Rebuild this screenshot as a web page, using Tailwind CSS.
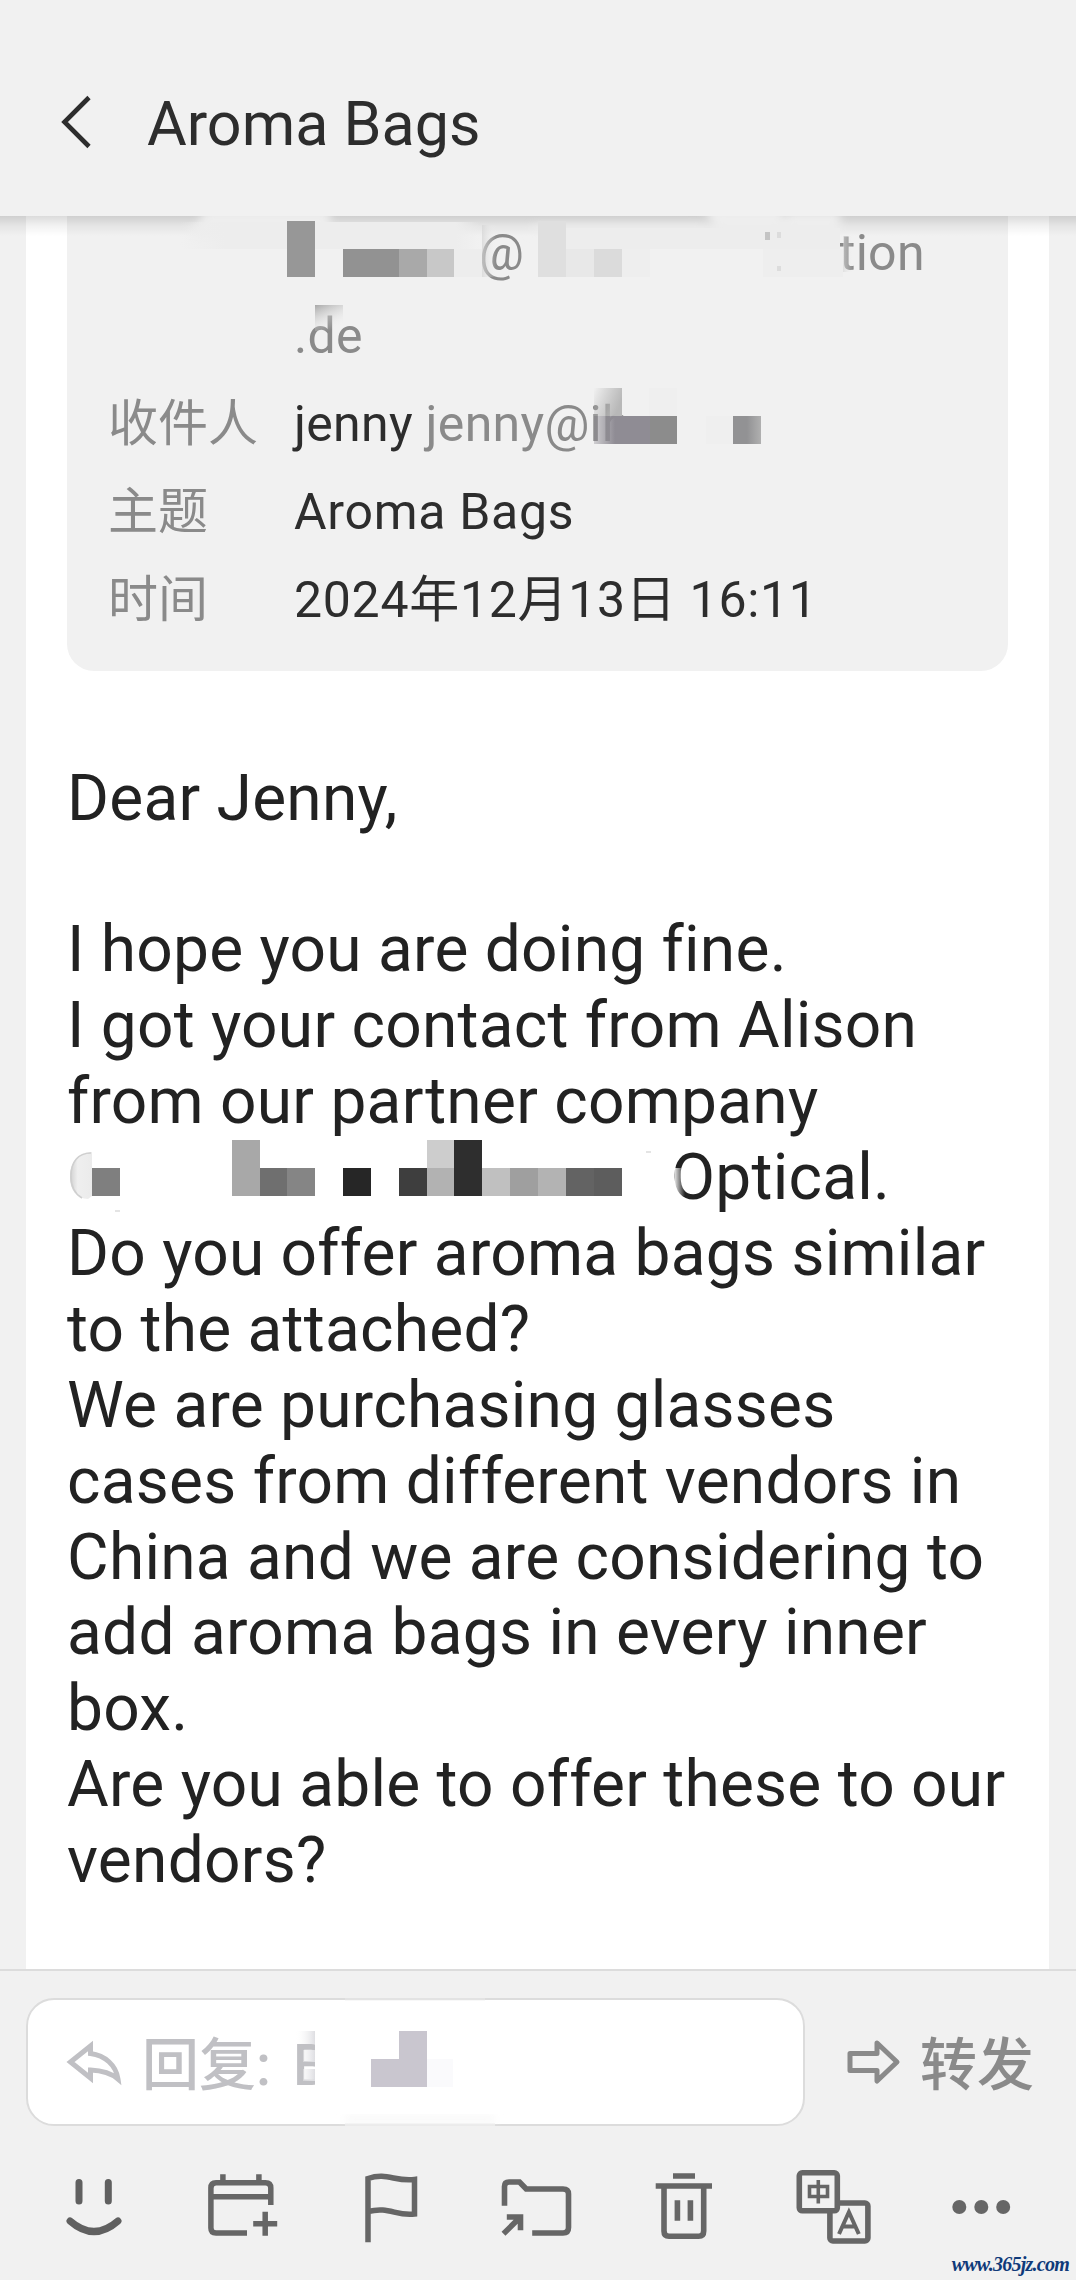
<!DOCTYPE html>
<html lang="zh-CN">
<head>
<meta charset="utf-8">
<title>Aroma Bags</title>
<script src="https://cdn.jsdelivr.net/npm/@tailwindcss/browser@4"></script>
</head>
<body class="bg-[#f1f1f1] text-[#2d2d2d] font-[Roboto,'Noto_Sans_CJK_SC',sans-serif]">
<div class="relative flex h-[2280px] w-[1076px] flex-col overflow-hidden">

  <header class="flex h-[216px] shrink-0 items-start bg-[#f1f1f1] pl-[58px]">
    <svg class="mt-[92px] h-[60px] w-[36px]" viewBox="0 0 36 60" fill="none" stroke="#2d2d2d" stroke-width="4.6"><path d="M31 5.5L6.500 30L31 54.500"/></svg>
    <h1 class="mt-[84px] ml-[53px] text-[61px] leading-[80px]">Aroma Bags</h1>
  </header>

  <main class="relative flex-1 overflow-hidden pr-[27px] pl-[26px]">
    <div class="h-full bg-white px-[41px]">
      <section class="flex h-[455px] flex-col gap-[5px] overflow-hidden rounded-b-[27px] bg-[#f1f1f1] pl-[41px] text-[50px] leading-[83px] tracking-[0.3px]">
        <div class="-mt-[4px] flex h-[166px] shrink-0">
          <div class="w-[186px]"></div>
          <div class="text-[#8a8a8a]">
            <div class="flex h-[83px]"><span class="ml-[185px] w-[360px]">@</span><span>tion</span></div>
            <div class="h-[83px]">.de</div>
          </div>
        </div>
        <div class="flex h-[83px] shrink-0"><span class="w-[186px] tracking-normal text-[#8a8a8a]">收件人</span><span class="whitespace-pre">jenny <span class="text-[#8a8a8a]">jenny@ih</span></span></div>
        <div class="flex h-[83px] shrink-0"><span class="w-[186px] tracking-normal text-[#8a8a8a]">主题</span><span class="tracking-[0.7px]">Aroma Bags</span></div>
        <div class="flex h-[83px] shrink-0"><span class="w-[186px] tracking-normal text-[#8a8a8a]">时间</span><span class="tracking-[0.7px]">2024年12月13日 16:11</span></div>
      </section>
      <article class="mt-[89.5px] whitespace-nowrap text-[64px] leading-[75.9px] tracking-[0.25px] text-[#222]">
        <p>Dear Jenny,</p>
        <br>
        <p>I hope you are doing fine.</p>
        <p>I got your contact from Alison<br>from our partner company<br><span class="inline-block w-[604px]"></span>Optical.</p>
        <p>Do you offer aroma bags similar<br>to the attached?</p>
        <p>We are purchasing glasses<br>cases from different vendors in<br>China and we are considering to<br>add aroma bags in every inner<br>box.</p>
        <p>Are you able to offer these to our<br>vendors?</p>
      </article>
    </div>
  </main>

  <footer class="h-[311px] shrink-0 border-t-2 border-[#dcdcdc] bg-[#f1f1f1]">
    <div class="flex items-center pt-[27px] pl-[26px]">
      <div class="flex h-[128px] w-[779px] items-center rounded-[28px] border-2 border-[#dcdcdc] bg-white pl-[36px]">
        <svg class="h-[52px] w-[60px]" viewBox="0 0 60 52" fill="none" stroke="#c0c0c4" stroke-width="5"><path d="M26.500 10L6.500 26L26.500 42V34C38 34.500 47 37 54 43C52 29 41 19.500 26.500 17.500Z"/></svg>
        <span class="mt-[7px] ml-[18px] text-[57px] leading-[80px] font-medium text-[#c0c0c4]">回复:<span class="ml-[22px]">B</span></span>
      </div>
      <svg class="ml-[40px] h-[52px] w-[60px]" viewBox="0 0 60 52" fill="none" stroke="#8a8a8a" stroke-width="5" stroke-linejoin="round"><path d="M5 17.500H32V7L52 26L32 45V34.500H5Z"/></svg>
      <span class="mt-[7px] ml-[15px] text-[57px] leading-[80px] font-medium text-[#8a8a8a]">转发</span>
    </div>
    <nav class="mt-[39px] flex justify-between pr-[55px] pl-[54px]">
      <svg class="size-20" viewBox="0 0 80 80" fill="none" stroke="#606060" stroke-width="7" stroke-linecap="round"><path d="M25 17.500V36M54.300 17.500V36M16 56Q40 77 64 56"/></svg>
      <svg class="size-20" viewBox="0 0 80 80" fill="none" stroke="#666" stroke-width="5.500"><path d="M68.800 40V23Q68.800 17.700 63.500 17.700H14Q8.900 17.700 8.900 23V63Q8.900 68 14 68H45M9 31.700H68M20.900 9.300V17M56.900 9.300V17M63.200 46.700V70.700M51.200 58.700H75.200"/></svg>
      <svg class="size-20" viewBox="0 0 80 80" fill="none" stroke="#666" stroke-width="5.500"><path d="M18 77.300V13.500C37 7 45 17 64.500 14.500V49C46 51.500 39 41 18 46.500"/></svg>
      <svg class="size-20" viewBox="0 0 80 80" fill="none" stroke="#666" stroke-width="5.600"><path d="M7.500 40.700V21.500Q7.500 17 12 17H22.500L29.200 24H66Q71.500 24 71.500 29V62.500Q71.500 68 66 68H35.200M6.500 68.700L23 52.500M9.800 52H23.500V65.300"/></svg>
      <svg class="size-20" viewBox="0 0 80 80" fill="none" stroke="#666" stroke-width="5.600"><path d="M28 11H50M10.700 21H67M19 21V66Q19 71.300 24 71.300H53.700Q58.700 71.300 58.700 66V21M32.400 35.300V55.700M45.400 35.300V55.700"/></svg>
      <svg class="size-20" viewBox="0 0 80 80" fill="#f1f1f1" stroke="#666" stroke-width="5.600"><rect x="36.900" y="38" width="38" height="38" rx="3"/><rect x="6.300" y="7.800" width="38" height="38" rx="3"/><path fill="none" stroke-width="3.600" d="M25.300 15V38.500M16.500 21.500H34.500V31.500H16.500Z"/><path fill="none" stroke-width="4" d="M46 69L55.900 47L65.800 69M49 61.500H63"/></svg>
      <svg class="size-20" viewBox="0 0 80 80" fill="#666"><circle cx="18.300" cy="42" r="7"/><circle cx="40.300" cy="42" r="7"/><circle cx="62.200" cy="42" r="7"/></svg>
    </nav>
  </footer>

  <!-- header shadow and the mosaic over private names -->
  <svg class="pointer-events-none absolute inset-0" width="1076" height="2280" viewBox="0 0 1076 2280">
    <defs>
      <linearGradient id="sh" x1="0" y1="0" x2="0" y2="1"><stop offset="0" stop-color="#000" stop-opacity=".14"/><stop offset=".5" stop-color="#000" stop-opacity=".05"/><stop offset="1" stop-color="#000" stop-opacity="0"/></linearGradient>
      <linearGradient id="d1" x1="0" y1="0" x2=".5" y2="1"><stop offset="0" stop-color="#a8a8a8"/><stop offset="1" stop-color="#f1f1f1" stop-opacity="0"/></linearGradient>
      <linearGradient id="r1" x1="0" y1="0" x2="1" y2=".4"><stop offset="0" stop-color="#b0b0b0" stop-opacity="0"/><stop offset="1" stop-color="#b8b8b8"/></linearGradient>
      <linearGradient id="r2"><stop offset="0" stop-color="#8f8c94" stop-opacity=".35"/><stop offset=".75" stop-color="#8f8c94"/></linearGradient>
      <linearGradient id="r3"><stop offset=".5" stop-color="#929294"/><stop offset="1" stop-color="#b0b0b0"/></linearGradient>
      <linearGradient id="b1"><stop offset="0" stop-color="#fff" stop-opacity="0"/><stop offset="1" stop-color="#dedee2"/></linearGradient>
      <linearGradient id="at"><stop offset="0" stop-color="#d4d4d4"/><stop offset="1" stop-color="#f1f1f1" stop-opacity="0"/></linearGradient>
      <linearGradient id="o1"><stop offset="0" stop-color="#fff" stop-opacity=".85"/><stop offset="1" stop-color="#fff" stop-opacity="0"/></linearGradient>
      <linearGradient id="c1"><stop offset="0" stop-color="#d0d0d0"/><stop offset=".35" stop-color="#efefef"/><stop offset="1" stop-color="#ebebeb"/></linearGradient>
      <linearGradient id="band"><stop offset="0" stop-color="#ededed" stop-opacity="0"/><stop offset=".15" stop-color="#ededed"/><stop offset=".92" stop-color="#ededed"/><stop offset="1" stop-color="#ededed" stop-opacity="0"/></linearGradient>
      <filter id="soft" x="-30%" y="-50%" width="160%" height="200%"><feGaussianBlur stdDeviation="5"/></filter>
      <clipPath id="below"><rect x="67" y="216" width="941" height="80"/></clipPath>
    </defs>
    <rect y="216" width="1076" height="20" fill="url(#sh)"/>
    <g clip-path="url(#below)" fill="#eeeeee">
      <path filter="url(#soft)" d="M205 210H330V238H190ZM536 226H700L694 224L716 232H530ZM704 208H782V232H716ZM790 212H840V232H770Z"/>
      <path fill="url(#band)" d="M180 222H480V249H180Z"/>
      <path fill="#ededed" d="M566 228H840V249H566Z"/>
    </g>
    <g shape-rendering="crispEdges">
      <path fill="#979797" d="M287 221h28v56h-28z"/>
      <path fill="#929292" d="M343 249h56v28h-56z"/>
      <path fill="#a9a9a9" d="M399 249h28v28h-28z"/>
      <path fill="#c8c8c8" d="M427 249h27v28h-27z"/>
      <path fill="#ededed" d="M454 249h28v28h-28z"/>
      <path fill="#dfdfdf" d="M538 221h28v56h-28z"/>
      <path fill="#e8e8e8" d="M566 249h28v28h-28z"/>
      <path fill="#dbdbdb" d="M594 249h28v28h-28z"/>
      <path fill="#eee" d="M622 249h28v28h-28zM763 249h80v28h-80z"/>
      <path fill="#efefef" d="M649 388h28v28h-28zM706 416h27v28h-27z"/>
      <path fill="#8f8c94" d="M622 416h28v28h-28z"/>
      <path fill="#8c8c8c" d="M650 416h27v28h-27z"/>
    </g>
    <path fill="url(#at)" opacity=".7" d="M482 225h14v52h-14z"/>
    <path fill="#c4c4c4" d="M765 232h5v8h-5z"/><path fill="#dcdcdc" d="M777 232h4v6h-4zM777 266h4v5h-4z"/>
    <path fill="url(#at)" opacity=".6" d="M843 236h10v36h-10z"/>
    <path fill="url(#d1)" d="M315 305h28v26h-28z"/>
    <path fill="url(#r1)" d="M594 388h28v28h-28z"/>
    <path fill="url(#r2)" d="M594 416h28v28h-28z"/>
    <path fill="url(#r3)" d="M733 416h28v28h-28z"/>

    <path fill="url(#c1)" d="M92 1152C78 1152 70 1162 70 1177C70 1190 77 1199 88 1199L92 1196Z"/>
    <path fill="none" stroke="#cfcfcf" stroke-width="1.500" d="M91 1153C78 1153 71 1162 71 1176C71 1187 75 1194 82 1198"/>
    <g shape-rendering="crispEdges">
      <path fill="#7f7f7f" d="M92 1168h28v28h-28z"/>
      <path fill="#a8a8a8" d="M232 1140h28v56h-28z"/>
      <path fill="#6f6f6f" d="M260 1168h27v28h-27z"/>
      <path fill="#858585" d="M287 1168h28v28h-28z"/>
      <path fill="#262626" d="M343 1168h28v28h-28z"/>
      <path fill="#3e3e3e" d="M399 1168h28v28h-28z"/>
      <path fill="#cdcdcd" d="M427 1140h27v28h-27z"/>
      <path fill="#b2b2b2" d="M427 1168h27v28h-27z"/>
      <path fill="#2e2e2e" d="M454 1140h28v56h-28z"/>
      <path fill="#c0c0c0" d="M482 1168h28v28h-28z"/>
      <path fill="#9f9f9f" d="M510 1168h28v28h-28z"/>
      <path fill="#b3b3b3" d="M538 1168h28v28h-28z"/>
      <path fill="#636363" d="M566 1168h28v28h-28z"/>
      <path fill="#5d5d5d" d="M594 1168h28v28h-28z"/>
    </g>
    <path fill="url(#o1)" d="M675 1168h10v28h-10z"/>
    <path fill="#e4e4e4" d="M115 1210h5v2h-5zM646 1151h5v2h-5z"/>

    <path fill="#fff" d="M315 2025h30v70h-30z"/>
    <path fill="url(#b1)" d="M295 2031h20v13h-20zM303 2050h12v12h-12zM303 2069h12v12h-12z"/>
    <path fill="#c9c6cf" d="M399 2031h28v56h-56v-28h28z"/>
    <path fill="#fafafc" d="M427 2059h26v28h-26z"/>
    <path fill="#f4f4f4" filter="url(#soft)" d="M345 2117h150v5h-150z"/>
    <path fill="#f1f1f1" opacity=".7" d="M345 2123h150v3h-150z"/>
    <path fill="#eee" opacity=".4" d="M345 1998h140v3h-140z"/>
  </svg>

  <div class="absolute right-[7px] bottom-[2px] font-['Liberation_Serif',serif] text-[20px] leading-[28px] font-bold italic tracking-[-0.75px] text-[#0f3a7a]">www.365jz.com</div>
</div>
</body>
</html>
